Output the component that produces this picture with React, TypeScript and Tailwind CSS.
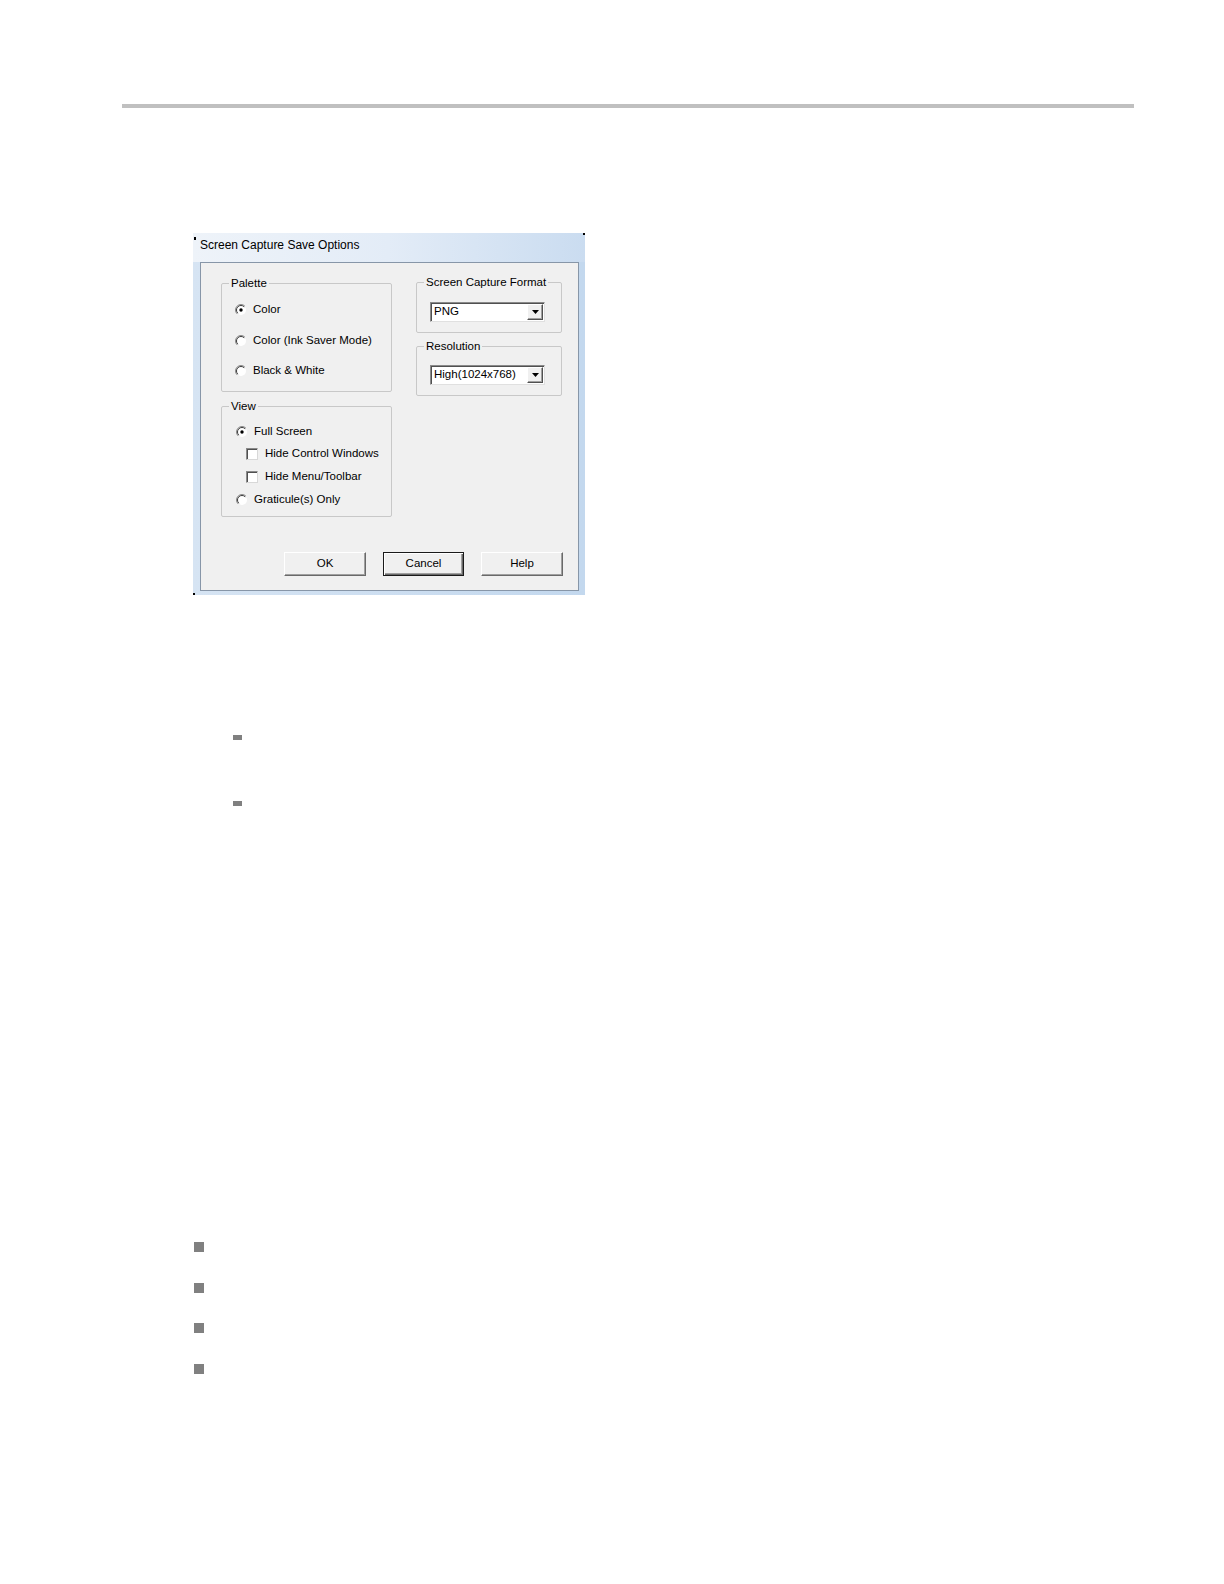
const font = { fontFamily: '"Liberation Sans", Arial, sans-serif' };

const Radio = ({ checked }: { checked?: boolean }) => (
  <svg width="12" height="12" viewBox="0 0 12 12" className="shrink-0">
    <circle cx="6" cy="6" r="5" fill="#ffffff" />
    <path d="M9.9 2.1 A5.5 5.5 0 0 0 2.1 9.9" stroke="#8a8a8a" strokeWidth="1" fill="none" />
    <path d="M9.2 2.8 A4.5 4.5 0 0 0 2.8 9.2" stroke="#3c3c3c" strokeWidth="1" fill="none" />
    {checked && <circle cx="6" cy="6" r="1.7" fill="#000000" />}
  </svg>
);

const Checkbox = () => (
  <div className="h-[12px] w-[12px] shrink-0 bg-white border border-t-[#8a8a8a] border-l-[#8a8a8a] border-r-[#d8d8d8] border-b-[#d8d8d8] shadow-[inset_1px_1px_0_#505050]" />
);

const GroupBox = ({
  label,
  className,
  children,
}: {
  label: string;
  className: string;
  children: React.ReactNode;
}) => (
  <fieldset className={`border border-[#c8c8c8] rounded-[2px] ${className}`}>
    <legend className="ml-[7px] px-[2px] text-[11.5px] leading-[14px]">{label}</legend>
    {children}
  </fieldset>
);

const Combo = ({ value }: { value: string }) => (
  <div className="ml-[13px] flex h-[20px] w-[115px] items-center bg-white border border-t-[#8a8a8a] border-l-[#8a8a8a] border-r-[#e0e0e0] border-b-[#e0e0e0] shadow-[inset_1px_1px_0_#505050]">
    <span className="flex-1 pl-[3px] text-[11.5px] leading-none">{value}</span>
    <div className="mr-[1px] flex h-[16px] w-[16px] items-center justify-center bg-[#f0f0f0] border border-t-white border-l-white border-r-[#505050] border-b-[#505050] shadow-[inset_-1px_-1px_0_#a0a0a0]">
      <svg width="7" height="4" viewBox="0 0 7 4">
        <path d="M0 0 H7 L3.5 4 Z" fill="#000000" />
      </svg>
    </div>
  </div>
);

const Button = ({ label, isDefault }: { label: string; isDefault?: boolean }) => (
  <div
    className={
      isDefault
        ? "flex h-[24px] w-[81px] items-center justify-center bg-[#f0f0f0] border border-[#1a1a1a] shadow-[inset_1px_1px_0_#ffffff,inset_-1px_-1px_0_#696969,inset_-2px_-2px_0_#a0a0a0] text-[11.5px]"
        : "flex h-[24px] w-[82px] items-center justify-center bg-[#f0f0f0] border border-t-white border-l-white border-r-[#696969] border-b-[#696969] shadow-[inset_-1px_-1px_0_#a0a0a0] text-[11.5px]"
    }
  >
    {label}
  </div>
);

const Dialog = () => (
  <div className="relative ml-[193px] mt-[125px] flex h-[362px] w-[392px] flex-col bg-linear-to-r from-[#d6e4f3] to-[#c3d8ee] text-black" style={font}>
    <span className="absolute left-[1px] top-[4px] h-[3px] w-[2px] bg-black" />
    <span className="absolute right-0 top-0 h-[2px] w-[2px] bg-black" />
    <span className="absolute bottom-0 left-0 h-[2px] w-[2px] bg-black" />
    <div className="h-[29px] bg-linear-to-r from-[#eef3f9] via-[#e3ecf7] to-[#cadcf0] pl-[7px] pt-[5px] text-[12px] leading-[14px]">
      Screen Capture Save Options
    </div>
    <div className="ml-[7px] mr-[6px] h-[329px] border border-[#8796a8] bg-[#f0f0f0] pt-[13px]">
      <div className="flex gap-[24px] pl-[20px]">
        <div className="flex w-[171px] flex-col">
          <GroupBox label="Palette" className="pt-[12px] pb-[12px]">
            <div className="flex flex-col pl-[13px] text-[11.5px]">
              <div className="flex h-4 items-center gap-[6px]">
                <Radio checked />
                <span>Color</span>
              </div>
              <div className="mt-[15px] flex h-4 items-center gap-[6px]">
                <Radio />
                <span>Color (Ink Saver Mode)</span>
              </div>
              <div className="mt-[14px] flex h-4 items-center gap-[6px]">
                <Radio />
                <span>Black &amp; White</span>
              </div>
            </div>
          </GroupBox>
          <GroupBox label="View" className="mt-[7px] pt-[11px] pb-[8px]">
            <div className="flex flex-col pl-[14px] text-[11.5px]">
              <div className="flex h-4 items-center gap-[6px]">
                <Radio checked />
                <span>Full Screen</span>
              </div>
              <div className="mt-[6px] flex h-4 items-center gap-[7px] pl-[10px]">
                <Checkbox />
                <span>Hide Control Windows</span>
              </div>
              <div className="mt-[7px] flex h-4 items-center gap-[7px] pl-[10px]">
                <Checkbox />
                <span>Hide Menu/Toolbar</span>
              </div>
              <div className="mt-[7px] flex h-4 items-center gap-[6px]">
                <Radio />
                <span>Graticule(s) Only</span>
              </div>
            </div>
          </GroupBox>
        </div>
        <div className="flex w-[146px] flex-col">
          <GroupBox label="Screen Capture Format" className="-mt-[1px] pt-[13px] pb-[10px]">
            <Combo value="PNG" />
          </GroupBox>
          <GroupBox label="Resolution" className="mt-[6px] pt-[12px] pb-[10px]">
            <Combo value="High(1024x768)" />
          </GroupBox>
        </div>
      </div>
      <div className="mt-[35px] flex justify-end gap-[17px] pr-[15px]">
        <Button label="OK" />
        <Button label="Cancel" isDefault />
        <Button label="Help" />
      </div>
    </div>
  </div>
);

export default function App() {
  return (
    <div className="h-[1584px] w-[1224px] overflow-hidden bg-white">
      <div className="pl-[122px] pt-[104px]">
        <div className="h-[4px] w-[1012px] bg-[#c0c0c0]" />
      </div>
      <Dialog />
      <div className="ml-[233px] mt-[140px] h-[5px] w-[9px] bg-[#808080]" />
      <div className="ml-[233px] mt-[61px] h-[5px] w-[9px] bg-[#808080]" />
      <div className="ml-[194px] mt-[436px] flex flex-col gap-[30.7px]">
        <div className="h-[10px] w-[10px] bg-[#808080]" />
        <div className="h-[10px] w-[10px] bg-[#808080]" />
        <div className="h-[10px] w-[10px] bg-[#808080]" />
        <div className="h-[10px] w-[10px] bg-[#808080]" />
      </div>
    </div>
  );
}
